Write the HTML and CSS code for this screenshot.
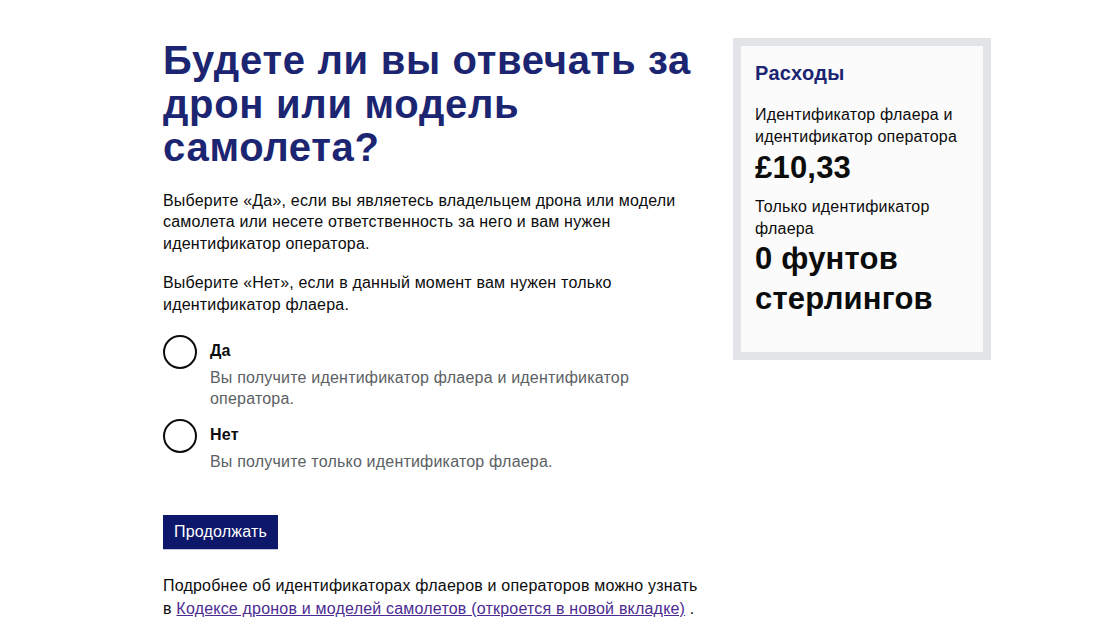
FILE: index.html
```html
<!DOCTYPE html>
<html lang="ru">
<head>
<meta charset="utf-8">
<title>Будете ли вы отвечать за дрон или модель самолета?</title>
<link rel="stylesheet" href="styles.css">
</head>
<body>
<div class="page">
  <main class="main">
    <h1 class="title">Будете ли вы отвечать за дрон или модель самолета?</h1>
    <p class="body">Выберите «Да», если вы являетесь владельцем дрона или модели самолета или несете ответственность за него и вам нужен идентификатор оператора.</p>
    <p class="body">Выберите «Нет», если в данный момент вам нужен только идентификатор флаера.</p>
    <div class="radios">
      <label class="radio">
        <span class="circle"></span>
        <span class="radio-text">
          <span class="radio-label">Да</span>
          <span class="radio-hint">Вы получите идентификатор флаера и идентификатор оператора.</span>
        </span>
      </label>
      <label class="radio">
        <span class="circle"></span>
        <span class="radio-text">
          <span class="radio-label">Нет</span>
          <span class="radio-hint">Вы получите только идентификатор флаера.</span>
        </span>
      </label>
    </div>
    <button class="button" type="button">Продолжать</button>
    <p class="body more">Подробнее об идентификаторах флаеров и операторов можно узнать в <a class="link" href="#">Кодексе дронов и моделей самолетов (откроется в новой вкладке)</a>&nbsp;.</p>
  </main>
  <aside class="costs">
    <h2 class="costs-title">Расходы</h2>
    <p class="costs-text">Идентификатор флаера и идентификатор оператора</p>
    <p class="costs-price">£10,33</p>
    <p class="costs-text">Только идентификатор флаера</p>
    <p class="costs-price last">0 фунтов стерлингов</p>
  </aside>
</div>
</body>
</html>
```

FILE: styles.css
```css
html, body {
  margin: 0;
  padding: 0;
  background: #ffffff;
}
body {
  font-family: "Liberation Sans", Arial, sans-serif;
  color: #0b0c0c;
  letter-spacing: 0.2px;
}
.page {
  display: flex;
  align-items: flex-start;
  gap: 25px;
  margin-left: 163px;
  padding-top: 38px;
}
.main {
  width: 545px;
  flex: none;
}
.title {
  margin: 1px 0 20px;
  font-size: 40px;
  line-height: 43.5px;
  font-weight: 700;
  letter-spacing: 0.7px;
  color: #1b2571;
}
.body {
  margin: 0 0 18px;
  font-size: 16px;
  line-height: 21.5px;
}
.radios {
  display: flex;
  flex-direction: column;
  gap: 10px;
  margin-top: 20px;
}
.radio {
  display: flex;
  gap: 13px;
  cursor: pointer;
}
.circle {
  flex: none;
  width: 30px;
  height: 30px;
  border: 2px solid #0b0c0c;
  border-radius: 50%;
}
.radio-text {
  display: flex;
  flex-direction: column;
  padding-top: 5px;
}
.radio-label {
  font-size: 16px;
  font-weight: 700;
  line-height: 22px;
}
.radio-hint {
  margin-top: 5px;
  font-size: 16px;
  line-height: 21px;
  color: #5b6164;
}
.button {
  display: block;
  margin: 43px 0 25px;
  padding: 7px 11px 8px;
  border: 0;
  background: #0e186b;
  color: #ffffff;
  font-family: "Liberation Sans", Arial, sans-serif;
  font-size: 16px;
  line-height: 19px;
  letter-spacing: 0.2px;
  box-shadow: 0 1px 0 #c5c7d6;
}
.more {
  line-height: 23px;
}
.link {
  color: #4c2c92;
}
.costs {
  width: 214px;
  flex: none;
  border: 8px solid #e3e4e7;
  background: #fbfbfb;
  padding: 15px 14px 33px 14px;
}
.costs-title {
  margin: 0 0 18px;
  font-size: 20px;
  line-height: 25px;
  letter-spacing: 0.3px;
  color: #1b2571;
}
.costs-text {
  margin: 0;
  font-size: 16px;
  line-height: 21.5px;
}
.costs-price {
  margin: 0 0 7px;
  font-size: 31px;
  line-height: 42px;
  font-weight: 700;
}
.costs-price.last {
  margin-bottom: 0;
  line-height: 40px;
}
```
